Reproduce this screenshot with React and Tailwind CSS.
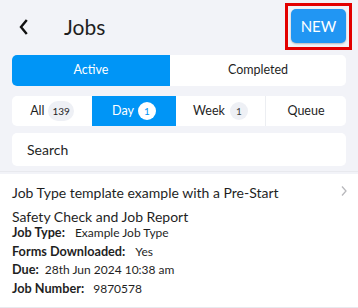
import React from "react";

export default function App() {
  return (
    <div className="w-[358px] h-[308px] overflow-hidden bg-[#f2f3f8] text-[#1f1f1f]" style={{ fontFamily: "Lato, 'Noto Sans', sans-serif" }}>
      {/* header */}
      <div className="flex items-center h-[55px] pl-[18px] pr-[6px]">
        <svg width="12" height="16" viewBox="0 0 12 16" className="mt-[-1px]">
          <path d="M8 2 L3 8 L8 14" fill="none" stroke="#111" strokeWidth="2.4" strokeLinecap="square" />
        </svg>
        <div className="ml-[34px] text-[21px] leading-none mb-[2px]">Jobs</div>
        <div className="ml-auto mb-[2px] border-[3px] border-[#e30000] p-[3px] pb-[4px]">
          <button className="w-[55px] h-[34px] rounded-[5px] bg-[#2196f3] text-white text-[15px] shadow-[0_1px_2px_rgba(0,0,0,0.25)]">NEW</button>
        </div>
      </div>

      {/* segmented */}
      <div className="mx-[12px] flex h-[31px] rounded-[5px] bg-white overflow-hidden text-[12.5px]">
        <div className="w-[158px] bg-[#0095f6] text-white flex items-center justify-center">Active</div>
        <div className="flex-1 flex items-center justify-center">Completed</div>
      </div>

      {/* filters */}
      <div className="mx-[12px] mt-[10px] flex h-[30px] rounded-[5px] bg-white overflow-hidden text-[12.5px]">
        <div className="w-[80px] flex items-center justify-center gap-[4px]">
          <span>All</span>
          <span className="h-[20px] px-[4px] rounded-full bg-[#eef0f5] text-[10px] flex items-center">139</span>
        </div>
        <div className="w-[84px] bg-[#0095f6] text-white flex items-center justify-center gap-[4px]">
          <span>Day</span>
          <span className="w-[18px] h-[18px] rounded-full bg-white text-[#0095f6] text-[10px] flex items-center justify-center">1</span>
        </div>
        <div className="w-[90px] flex items-center justify-center gap-[5px] border-r border-[#eceef2]">
          <span>Week</span>
          <span className="w-[18px] h-[18px] rounded-full bg-[#eef0f5] text-[#444] text-[10px] flex items-center justify-center">1</span>
        </div>
        <div className="flex-1 flex items-center justify-center">Queue</div>
      </div>

      {/* search */}
      <div className="mx-[12px] mt-[7px] h-[33px] rounded-[5px] bg-white flex items-center pl-[15px] text-[14px]">Search</div>

      {/* card */}
      <div className="mt-[5px] border-t border-[#e8e9ee] pt-[2px]">
        <div className="bg-white pl-[12px] pr-[10px] pt-[7px] pb-[10px] flex border-b border-[#e8e9ee]">
          <div className="flex-1">
            <div className="text-[14px] leading-[24px] max-w-[300px]">Job Type template example with a Pre-Start Safety Check and Job Report</div>
            <div className="text-[12px] mt-[-6px]">
              <div className="h-[18.5px] leading-[18.5px]"><span className="font-bold text-[12.7px]">Job Type:</span><span className="ml-[10px]">Example Job Type</span></div>
              <div className="h-[18.5px] leading-[18.5px]"><span className="font-bold text-[12.7px]">Forms Downloaded:</span><span className="ml-[10px]">Yes</span></div>
              <div className="h-[18.5px] leading-[18.5px]"><span className="font-bold text-[12.7px]">Due:</span><span className="ml-[6px]">28th Jun 2024 10:38 am</span></div>
              <div className="h-[18.5px] leading-[18.5px]"><span className="font-bold text-[12.7px]">Job Number:</span><span className="ml-[9px]">9870578</span></div>
            </div>
          </div>
          <svg width="8" height="12" viewBox="0 0 8 12" className="mt-[4px]">
            <path d="M2 1.5 L6 6 L2 10.5" fill="none" stroke="#b8b8bc" strokeWidth="1.3" />
          </svg>
        </div>
      </div>
    </div>
  );
}
